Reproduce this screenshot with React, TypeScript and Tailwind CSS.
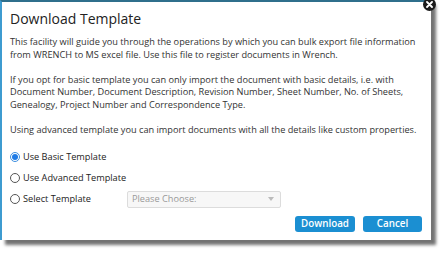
import { useState } from "react";

function Radio({ label, checked, onSelect }: { label: string; checked: boolean; onSelect: () => void }) {
  return (
    <label className="flex items-center gap-[3px] cursor-pointer" onClick={onSelect}>
      <span
        className={
          checked
            ? "w-[10px] h-[10px] rounded-full border border-[#3b8ee0] bg-white grid place-items-center"
            : "w-[10px] h-[10px] rounded-full border border-[#555] bg-white"
        }
      >
        {checked && <span className="w-[6px] h-[6px] rounded-full bg-[#1e7be6]" />}
      </span>
      <span>{label}</span>
    </label>
  );
}

export default function App() {
  const [choice, setChoice] = useState("basic");

  return (
    <div className="w-[446px] h-[256px] bg-white overflow-hidden" style={{ fontFamily: '"Open Sans", sans-serif' }}>
      <div className="relative w-[431px] h-[240px] bg-white border-t-2 border-t-[#2f6f8c] border-l-2 border-l-[#3d9bd0] shadow-[5px_5px_3px_rgba(0,0,0,0.55)]">
        {/* close button */}
        <span className="absolute -top-[4px] right-[-5px] w-[13px] h-[13px] rounded-full bg-[#1b1b1b] grid place-items-center">
          <svg width="7" height="7" viewBox="0 0 7 7">
            <path d="M1 1L6 6M6 1L1 6" stroke="white" strokeWidth="1.8" strokeLinecap="round" />
          </svg>
        </span>

        <div className="pl-[8px] pr-[2px] pt-[8px] text-[#333]">
          <h1 className="text-[14px] leading-[18px] text-[#222] m-0">Download Template</h1>

          <div className="mt-[8px] text-[9.2px] leading-[12.5px] whitespace-nowrap">
            <p className="m-0">
              This facility will guide you through the operations by which you can bulk export file information
              <br />
              from WRENCH to MS excel file. Use this file to register documents in Wrench.
            </p>
            <p className="m-0 mt-[12.5px]">
              If you opt for basic template you can only import the document with basic details, i.e. with
              <br />
              Document Number, Document Description, Revision Number, Sheet Number, No. of Sheets,
              <br />
              Genealogy, Project Number and Correspondence Type.
            </p>
            <p className="m-0 mt-[12.5px]">
              Using advanced template you can import documents with all the details like custom properties.
            </p>
          </div>

          <div className="mt-[15px] flex flex-col gap-[9px] text-[9.2px] leading-[12px] text-[#222]">
            <Radio label="Use Basic Template" checked={choice === "basic"} onSelect={() => setChoice("basic")} />
            <Radio label="Use Advanced Template" checked={choice === "advanced"} onSelect={() => setChoice("advanced")} />
            <div className="flex items-center h-[12px]">
              <div className="w-[117px]">
                <Radio label="Select Template" checked={choice === "select"} onSelect={() => setChoice("select")} />
              </div>
              <div className="w-[154px] h-[17px] shrink-0 border border-[#dcdcdc] rounded-[2px] bg-[#f7f7f7] flex items-center justify-between pl-[4px] pr-[6px] text-[#999]">
                <span>Please Choose:</span>
                <span className="w-0 h-0 border-l-[3.5px] border-r-[3.5px] border-t-[4px] border-l-transparent border-r-transparent border-t-[#bbb]" />
              </div>
            </div>
          </div>

          <div className="mt-[11px] flex justify-end gap-[8px] pr-[7px]">
            <button className="w-[60px] h-[16px] rounded-[3px] bg-[#1b8fd2] text-white text-[9.8px] font-semibold leading-[16px]">
              Download
            </button>
            <button className="w-[59px] h-[16px] rounded-[3px] bg-[#1b8fd2] text-white text-[9.8px] font-semibold leading-[16px]">
              Cancel
            </button>
          </div>
        </div>
      </div>
    </div>
  );
}
